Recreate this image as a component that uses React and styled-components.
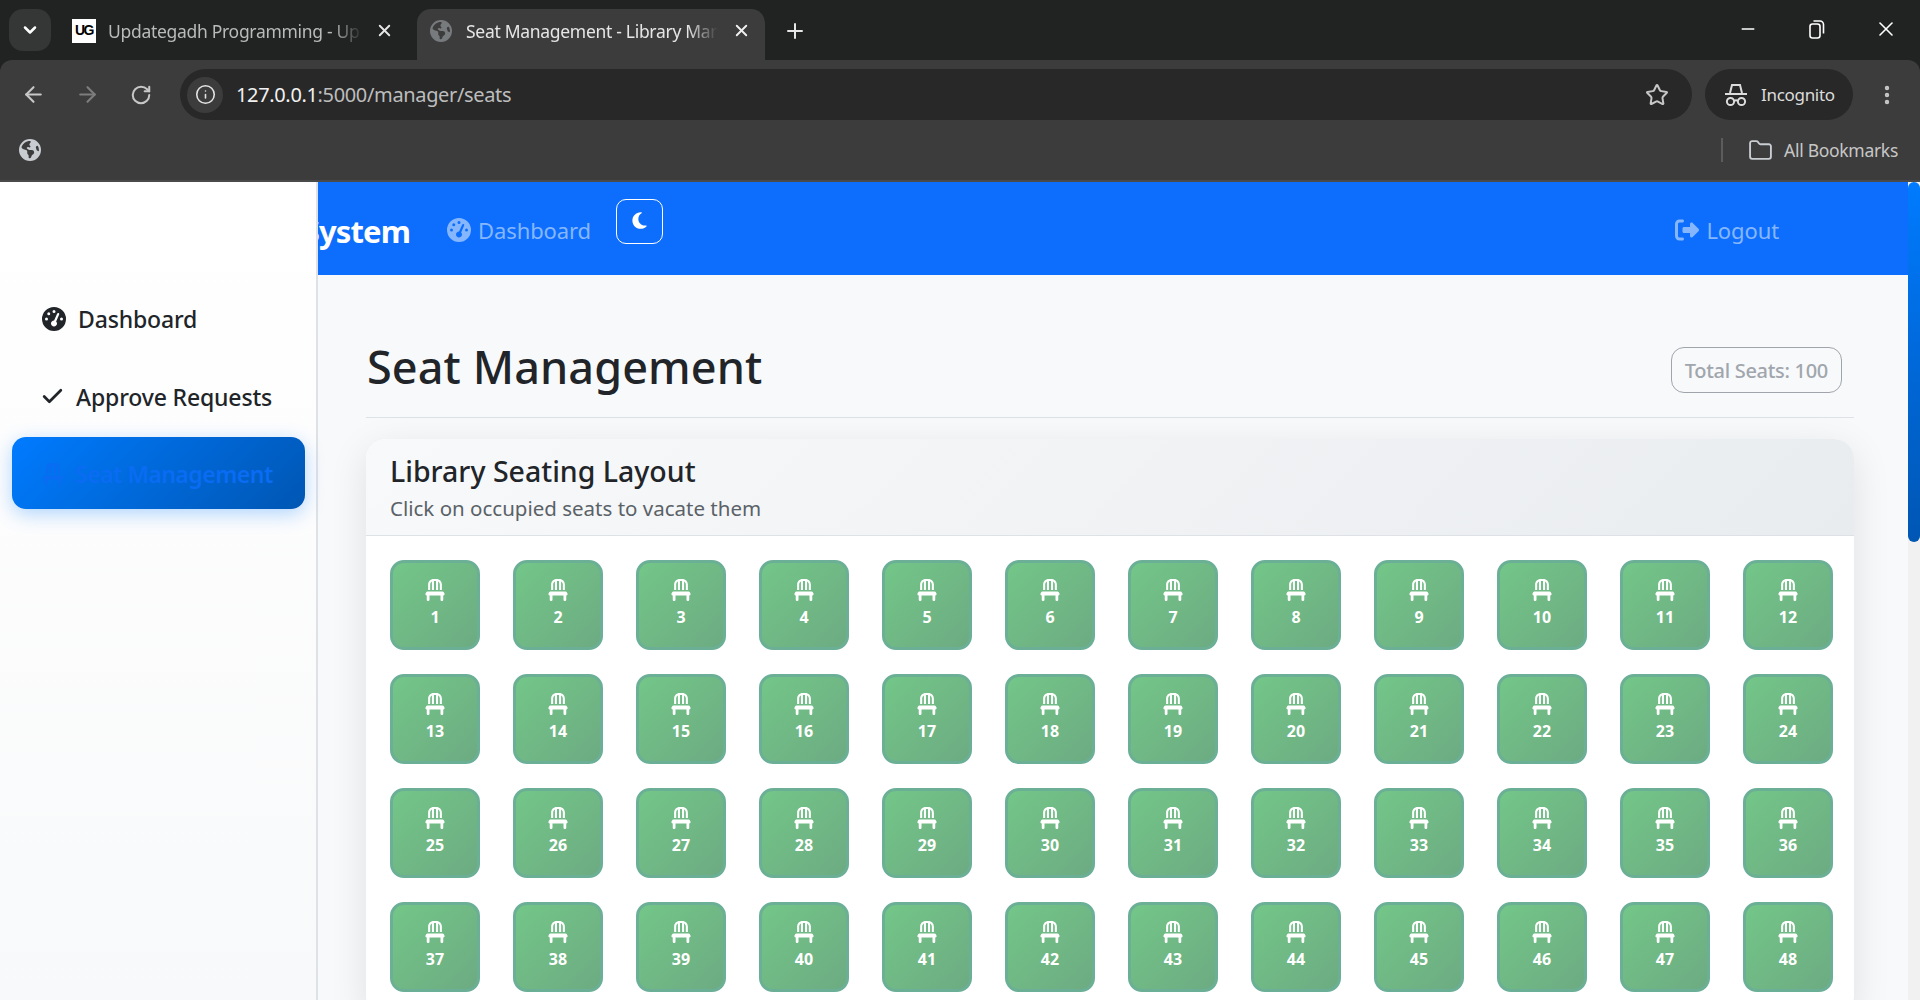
import React from 'react';
import styled, { createGlobalStyle } from 'styled-components';
import { FaChair, FaEarthAmericas, FaGaugeHigh, FaMoon, FaRightFromBracket } from 'react-icons/fa6';
import { ArrowLeft, ArrowRight, Check, ChevronDown, Folder, Info, Minus, MoreVertical, Plus, RotateCw, Star, X } from 'lucide-react';

const UI_FONT = '"Noto Sans", "Open Sans", sans-serif';

const GlobalStyle = createGlobalStyle`
    html, body, #root {
        height: 100%;
        margin: 0;
        overflow: hidden;
    }
    body {
        font-family: ${UI_FONT};
        background: #f8f9fa;
    }
    a {
        text-decoration: none;
    }
    * {
        box-sizing: border-box;
    }
`

const Shell = styled.div`
    height: 100%;
    display: flex;
    flex-direction: column;
`

/* browser chrome */
const Chrome = styled.header`
    flex: 0 0 182px;
    background: #202322;
    display: flex;
    flex-direction: column;
`
const TabStrip = styled.div`
    height: 60px;
    display: flex;
    align-items: flex-end;
    padding-left: 9px;
    color: #fff;
`
const TabSearch = styled.div`
    width: 42px;
    height: 42px;
    margin-bottom: 9px;
    margin-right: 12px;
    border-radius: 14px;
    background: #343736;
    display: flex;
    align-items: center;
    justify-content: center;
`
const Tab = styled.div`
    width: ${props => props.$width}px;
    height: 51px;
    padding: 0 ${props => props.$padRight}px 8px ${props => props.$pad}px;
    display: flex;
    align-items: center;
    gap: ${props => props.$active ? 14 : 12}px;
    border-radius: 14px 14px 0 0;
    background: ${props => props.$active ? '#3c3c3c' : 'transparent'};
    color: ${props => props.$active ? '#e6e6e6' : '#b9bbba'};
`
const TabTitle = styled.span`
    flex: 1;
    overflow: hidden;
    white-space: nowrap;
    font-size: 17.5px;
    letter-spacing: -0.3px;
    -webkit-mask-image: linear-gradient(to right, #000 88%, transparent);
    mask-image: linear-gradient(to right, #000 88%, transparent);
`
const Favicon = styled.span`
    flex: 0 0 24px;
    height: 24px;
    background: #fff;
    color: #000;
    font: 900 14px/22px "Liberation Sans", sans-serif;
    letter-spacing: -1.5px;
    text-align: center;
`
const NewTab = styled.div`
    margin: 0 0 17px 18px;
    display: flex;
`
const WindowControls = styled.div`
    margin-left: auto;
    align-self: flex-start;
    height: 58px;
    display: flex;
    align-items: center;
`
const WindowButton = styled.div`
    width: 69px;
    display: flex;
    justify-content: center;
`
const Toolbar = styled.div`
    height: 60px;
    padding: 9px 0 0 33px;
    background: #3c3c3c;
    border-radius: 12px 12px 0 0;
    display: flex;
    align-items: center;
    color: #c7c7c7;
`
const NavIcon = styled.div`
    width: 54px;
    margin-left: -27px;
    margin-right: 27px;
    display: flex;
    justify-content: center;
    color: ${props => props.$dim ? '#7d7d7d' : '#c7c7c7'};
`
const Omnibox = styled.div`
    width: 1512px;
    height: 51px;
    margin-left: -15px;
    padding: 0 23px 0 7px;
    border-radius: 26px;
    background: #282828;
    display: flex;
    align-items: center;
`
const InfoChip = styled.div`
    width: 36px;
    height: 36px;
    border-radius: 50%;
    background: #3c3c3c;
    display: flex;
    align-items: center;
    justify-content: center;
    color: #e3e3e3;
`
const UrlText = styled.span`
    margin-left: 13px;
    flex: 1;
    font-size: 20px;
    letter-spacing: -0.35px;
    color: #bdbdbd;
    b {
        font-weight: 400;
        color: #f1f1f1;
    }
`
const IncognitoChip = styled.div`
    width: 148px;
    height: 51px;
    margin-left: 13px;
    padding-left: 20px;
    border-radius: 26px;
    background: #282828;
    display: flex;
    align-items: center;
    gap: 14px;
    font-size: 17px;
    letter-spacing: -0.3px;
    color: #dcdcdc;
`
const MenuIcon = styled.div`
    margin-left: 22px;
    display: flex;
`
const Bookmarks = styled.div`
    flex: 1;
    background: #3c3c3c;
    border-bottom: 2px solid #4a4a4a;
    padding: 0 22px 0 19px;
    display: flex;
    align-items: center;
    color: #c9cdd1;
`
const BookmarkDivider = styled.div`
    width: 2px;
    height: 24px;
    margin-left: auto;
    margin-right: 25px;
    background: #5c5c5c;
`
const BookmarkLabel = styled.span`
    margin-left: 11px;
    font-size: 17.5px;
    letter-spacing: -0.3px;
    color: #c7c7c7;
`

/* page */
const Viewport = styled.div`
    position: relative;
    flex: 1;
    min-height: 0;
    overflow: hidden;
`
const ScrollTrack = styled.div`
    position: absolute;
    z-index: 3;
    top: 0;
    right: 0;
    bottom: 0;
    width: 12px;
    background: #f1f1f1;
`
const ScrollThumb = styled.div`
    height: 360px;
    border-radius: 6px;
    background: linear-gradient(180deg, #007bff, #0056b3);
`
const Navbar = styled.nav`
    height: 93px;
    padding: 17px 141px 0 0;
    background: #0d6efd;
    display: flex;
    align-items: flex-start;
    overflow: hidden;
`
const Brand = styled.a`
    flex: 0 0 410px;
    min-width: 0;
    margin-top: 11px;
    display: flex;
    justify-content: flex-end;
    white-space: nowrap;
    font-size: 31px;
    line-height: 42px;
    font-weight: 700;
    letter-spacing: -0.9px;
    color: #fff;
`
const NavLink = styled.a`
    display: flex;
    align-items: center;
    gap: 7px;
    margin-top: 15px;
    height: 32px;
    font-size: 22px;
    letter-spacing: -0.1px;
    color: #86b7fe;
    margin-left: ${props => props.$left || 0};
`
const ThemeButton = styled.button`
    width: 47px;
    height: 45px;
    margin-left: 25px;
    border: 1px solid #fff;
    border-radius: 10px;
    background: transparent;
    color: #fff;
    display: flex;
    align-items: center;
    justify-content: center;
    padding: 0 0 2px;
`
const Sidebar = styled.aside`
    position: absolute;
    z-index: 2;
    left: 0;
    top: 0;
    bottom: 0;
    width: 318px;
    padding: 100px 11px 0 12px;
    background: linear-gradient(180deg, #ffffff, #f8f9fa);
    border-right: 2px solid #dee2e6;
    display: flex;
    flex-direction: column;
    gap: 5.5px;
`
const SideItem = styled.a`
    flex: 0 0 72px;
    padding: 2px 0 0 30px;
    display: flex;
    align-items: center;
    gap: ${props => props.$gap}px;
    border-radius: 14px;
    font-size: 23px;
    font-weight: ${props => props.$active ? 600 : 500};
    letter-spacing: ${props => props.$active ? '-0.5px' : '-0.15px'};
    color: ${props => props.$active ? '#0a6cf2' : '#212529'};
    background: ${props => props.$active ? 'linear-gradient(135deg, #007bff, #0056b3)' : 'transparent'};
    box-shadow: ${props => props.$active ? '0 5px 19px rgba(0, 123, 255, 0.3)' : 'none'};
`
const CheckMark = styled(Check)`
    margin-left: -2px;
`
const Main = styled.main`
    margin-left: 318px;
    padding: 0 66px 24px 48px;
`
const TitleRow = styled.div`
    height: 143px;
    padding: 62px 12px 0 1px;
    border-bottom: 1px solid #dee2e6;
    margin-bottom: 21px;
    display: flex;
    align-items: flex-start;
    justify-content: space-between;
`
const PageTitle = styled.h1`
    margin: 0;
    font-size: 45px;
    line-height: 60px;
    font-weight: 500;
    letter-spacing: 0.1px;
    color: #212529;
`
const TotalBadge = styled.span`
    height: 46px;
    margin-top: 10px;
    padding: 0 13px;
    border: 1px solid #a0a4ab;
    border-radius: 13px;
    display: flex;
    align-items: center;
    font-size: 20px;
    font-weight: 500;
    letter-spacing: -0.3px;
    color: #a0a6ad;
`
const Card = styled.section`
    background: #fff;
    border-radius: 20px;
    box-shadow: 0 10px 38px rgba(0, 0, 0, 0.1);
`
const CardHeader = styled.div`
    height: 97px;
    padding: 12px 24px 0;
    border-radius: 20px 20px 0 0;
    border-bottom: 1px solid #dee2e6;
    background: linear-gradient(135deg, #f8f9fa, #e9ecef);
`
const CardTitle = styled.h2`
    margin: 0;
    font-size: 28.5px;
    line-height: 40px;
    font-weight: 500;
    color: #212529;
`
const CardSub = styled.p`
    margin: 2px 0 0;
    font-size: 20.5px;
    line-height: 30px;
    color: #5a6268;
`
const SeatGrid = styled.div`
    padding: 24px 21px 24px 24px;
    display: grid;
    grid-template-columns: repeat(12, 90px);
    justify-content: space-between;
    row-gap: 24px;
`
const Seat = styled.button`
    height: 90px;
    padding: 0 0 3px;
    border: 3px solid #6bb096;
    border-radius: 14px;
    background: linear-gradient(135deg, #73c688, #6dab82);
    color: #fff;
    font-family: inherit;
    font-size: 16px;
    font-weight: 700;
    line-height: 22px;
    display: flex;
    flex-direction: column;
    align-items: center;
    justify-content: center;
    gap: 5px;
`

const seats = Array.from({ length: 48 }, (_, i) => i + 1);

function RestoreIcon() {
    return (
        <svg width="16" height="20" viewBox="0 0 16 20" fill="none" stroke="#fff" strokeWidth="1.6">
            <rect x="1" y="5" width="10" height="14" rx="2.5" />
            <path d="M4.5 2h6.5a3.5 3.5 0 0 1 3.5 3.5v9" />
        </svg>
    );
}

function IncognitoIcon() {
    return (
        <svg width="22" height="24" viewBox="0 0 22 24" fill="none" stroke="#dcdcdc" strokeWidth="2">
            <path d="M5 10 L7 2 H15 L17 10" />
            <path d="M0 11 H22" />
            <circle cx="5.5" cy="18.5" r="3.6" />
            <circle cx="16.5" cy="18.5" r="3.6" />
            <path d="M9 18 Q11 16.6 13 18" />
        </svg>
    );
}

export default function App() {
    return (
        <Shell>
            <GlobalStyle />
            <Chrome>
                <TabStrip>
                    <TabSearch><ChevronDown size={20} strokeWidth={3} /></TabSearch>
                    <Tab $width={354} $pad={9} $padRight={23}>
                        <Favicon>UG</Favicon>
                        <TabTitle>Updategadh Programming - Up</TabTitle>
                        <X size={19} strokeWidth={2.4} color="#e6e6e6" />
                    </Tab>
                    <Tab $active $width={348} $pad={13} $padRight={14}>
                        <FaEarthAmericas size={22} color="#787b7e" />
                        <TabTitle>Seat Management - Library Man</TabTitle>
                        <X size={19} strokeWidth={2.4} color="#f0f0f0" />
                    </Tab>
                    <NewTab><Plus size={24} strokeWidth={2} color="#e6e6e6" /></NewTab>
                    <WindowControls>
                        <WindowButton><Minus size={20} strokeWidth={1.6} /></WindowButton>
                        <WindowButton><RestoreIcon /></WindowButton>
                        <WindowButton><X size={24} strokeWidth={1.6} /></WindowButton>
                    </WindowControls>
                </TabStrip>
                <Toolbar>
                    <NavIcon><ArrowLeft size={25} strokeWidth={2} /></NavIcon>
                    <NavIcon $dim><ArrowRight size={25} strokeWidth={2} /></NavIcon>
                    <NavIcon><RotateCw size={22} strokeWidth={2.2} /></NavIcon>
                    <Omnibox>
                        <InfoChip><Info size={21} strokeWidth={1.8} /></InfoChip>
                        <UrlText><b>127.0.0.1</b>:5000/manager/seats</UrlText>
                        <Star size={24} strokeWidth={2} />
                    </Omnibox>
                    <IncognitoChip><IncognitoIcon />Incognito</IncognitoChip>
                    <MenuIcon><MoreVertical size={24} strokeWidth={2.4} /></MenuIcon>
                </Toolbar>
                <Bookmarks>
                    <FaEarthAmericas size={22} />
                    <BookmarkDivider />
                    <Folder size={25} strokeWidth={1.8} />
                    <BookmarkLabel>All Bookmarks</BookmarkLabel>
                </Bookmarks>
            </Chrome>
            <Viewport>
                <Sidebar>
                    <SideItem $gap={12} href="#"><FaGaugeHigh size={24} />Dashboard</SideItem>
                    <SideItem $gap={11} href="#"><CheckMark size={25} strokeWidth={2.6} />Approve Requests</SideItem>
                    <SideItem $active $gap={11} href="#"><FaChair size={22} />Seat Management</SideItem>
                </Sidebar>
                <ScrollTrack><ScrollThumb /></ScrollTrack>
                <Navbar>
                    <Brand href="#">Library Management System</Brand>
                    <NavLink href="#" $left="37px"><FaGaugeHigh size={24} />Dashboard</NavLink>
                    <ThemeButton><FaMoon size={19} /></ThemeButton>
                    <NavLink href="#" $left="auto"><FaRightFromBracket size={24} />Logout</NavLink>
                </Navbar>
                <Main>
                    <TitleRow>
                        <PageTitle>Seat Management</PageTitle>
                        <TotalBadge>Total Seats: 100</TotalBadge>
                    </TitleRow>
                    <Card>
                        <CardHeader>
                            <CardTitle>Library Seating Layout</CardTitle>
                            <CardSub>Click on occupied seats to vacate them</CardSub>
                        </CardHeader>
                        <SeatGrid>
                            {seats.map(n => (
                                <Seat key={n}><FaChair size={22} />{n}</Seat>
                            ))}
                        </SeatGrid>
                    </Card>
                </Main>
            </Viewport>
        </Shell>
    );
}
